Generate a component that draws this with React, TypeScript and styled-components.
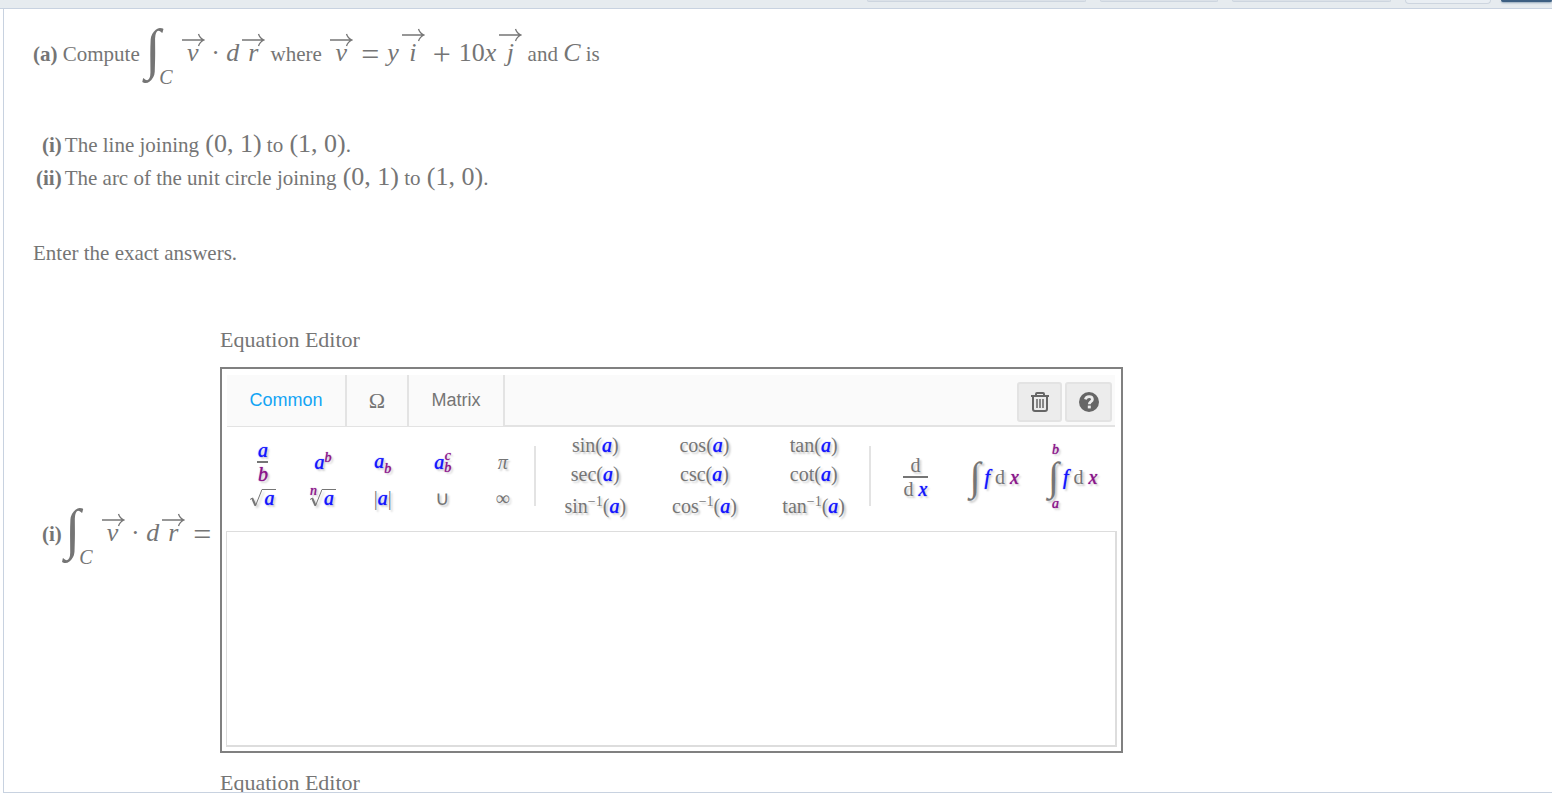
import React from "react";
import styled, { createGlobalStyle } from "styled-components";

const serif = `"Liberation Serif", "Times New Roman", serif`;
const sans = `"Liberation Sans", Arial, sans-serif`;
const ink = "#757575";

const GlobalStyle = createGlobalStyle`
  * { box-sizing: border-box; }
  body { margin: 0; background: #fff; }
`;

const Page = styled.div`
  display: flex;
  flex-direction: column;
  height: 100vh;
  padding-bottom: 2px;
  overflow: hidden;
  font-family: ${serif};
  font-size: 21px;
  line-height: 24px;
  color: ${ink};
`;

const TopBar = styled.header`
  flex: none;
  display: flex;
  justify-content: flex-end;
  align-items: flex-start;
  gap: 14px;
  height: 9px;
  overflow: hidden;
  background: #e6ebef;
  border-bottom: 1px solid #c8d2e0;
`;

const BarPair = styled.div`
  display: flex;
  align-items: flex-start;
  gap: 10px;
`;

const BarButton = styled.button<{ $width: number; $tone?: "light" | "dark" }>`
  flex: none;
  width: ${(p) => p.$width}px;
  height: ${(p) => (p.$tone === "light" ? 4 : 2)}px;
  padding: 0;
  border: 1px solid ${(p) => (p.$tone === "dark" ? "#3d5f82" : "#cdd5df")};
  border-top: 0;
  border-radius: 0 0 4px 4px;
  background: ${(p) => (p.$tone === "dark" ? "#3d5f82" : p.$tone === "light" ? "#e9eef3" : "#dbe1e8")};
  box-shadow: ${(p) => (p.$tone === "dark" ? "0 1px 2px #8fa3b8" : "none")};
`;

const Panel = styled.main`
  flex: 1;
  min-height: 0;
  overflow: hidden;
  margin-left: 3px;
  padding: 12px 16px 0 29px;
  border-left: 1px solid #c8d2e0;
  border-bottom: 1px solid #c8d2e0;
`;

const Prompt = styled.p`
  margin: 0;
  height: 108px;
  white-space: nowrap;
`;

const PathList = styled.ul`
  margin: 0;
  padding: 0;
  list-style: none;
  line-height: 33px;
`;

const PathItem = styled.li<{ $indent: number }>`
  height: 33px;
  padding-left: ${(p) => p.$indent}px;
`;

const Mark = styled.b`
  margin-right: 3px;
`;

const Instruction = styled.p`
  margin: 46px 0 0;
`;

const M = styled.span`
  font-size: 26px;
  line-height: 24px;
  white-space: pre;
`;

const Point = styled(M)`
  margin-left: 1px;
`;

const Op = styled.span`
  margin: 0 8px;
  font-size: 32px;
  line-height: 24px;
  vertical-align: -4px;
`;

const V = styled.i`
  font-size: 26px;
  line-height: 24px;
`;

const VecBox = styled.span<{ $raise: number }>`
  display: inline-block;
  margin-left: 2px;
  text-align: center;
  font-size: 26px;
  font-style: italic;
  line-height: 24px;
  svg {
    display: block;
    margin-bottom: ${(p) => p.$raise}px;
  }
`;

const IntegralBox = styled.span`
  font-size: 56px;
  font-style: italic;
  line-height: 56px;
  vertical-align: -7px;
`;

const IntegralLimit = styled.sub`
  margin: 0 6px 0 -1px;
  font-size: 20px;
  font-style: italic;
  line-height: 10px;
  vertical-align: -23px;
`;

function Vec({ children, raise = -6 }: { children: string; raise?: number }) {
  return (
    <VecBox $raise={raise}>
      <svg width="24" height="14" viewBox="0 0 24 14" fill="none" stroke={ink} strokeWidth="1.3">
        <path d="M1 7H23M17.5 1C18.5 4 20.5 6 23 7C20.5 8 18.5 10 17.5 13" />
      </svg>
      {children}
    </VecBox>
  );
}

function LineIntegral() {
  return (
    <>
      <IntegralBox>∫</IntegralBox>
      <IntegralLimit>C</IntegralLimit>
      <Vec>v</Vec>
      <M> · </M>
      <V>d</V>
      <Vec>r</Vec>
    </>
  );
}

const AnswerRow = styled.section`
  display: flex;
  margin-top: 63px;
`;

const AnswerLabel = styled.div`
  flex: none;
  width: 187px;
  padding: 173px 0 0 9px;
  white-space: nowrap;
`;

const EditorColumn = styled.div`
  flex: 1;
  min-width: 0;
  max-width: 903px;
`;

const EditorTitle = styled.h2`
  margin: 0 0 15px;
  font-size: 22px;
  font-weight: normal;
  line-height: 24px;
`;

const EditorBox = styled.div`
  margin-bottom: 18px;
  padding: 6px 4px 4px;
  border: 2px solid #808080;
`;

const TabBar = styled.div`
  display: flex;
  height: 52px;
  margin: 0 2px 0 1px;
  background: #fafafa;
`;

const Tab = styled.button<{ $active?: boolean; $width: number }>`
  flex: none;
  width: ${(p) => p.$width}px;
  padding: 0;
  border: 0;
  border-right: 2px solid #e3e3e3;
  border-bottom: 1px solid #e3e3e3;
  background: transparent;
  color: ${(p) => (p.$active ? "#12a4f4" : "#757575")};
  font-family: ${sans};
  font-size: 18px;
`;

const Omega = styled.span`
  font-family: ${serif};
  font-size: 22px;
`;

const TabActions = styled.div`
  flex: 1;
  display: flex;
  justify-content: flex-end;
  gap: 3px;
  padding: 7px 3px 3px 0;
  border-bottom: 2px solid #e3e3e3;
`;

const ActionButton = styled.button<{ $width: number }>`
  display: grid;
  place-items: center;
  width: ${(p) => p.$width}px;
  height: 40px;
  padding: 0;
  border: 2px solid #e3e3e3;
  border-radius: 3px;
  background: #ececec;
  color: #666;
`;

const Keys = styled.div`
  display: flex;
  height: 104px;
  padding: 0 5px 0 7px;
`;

const Divider = styled.div`
  flex: none;
  width: 2px;
  height: 60px;
  margin: 19px 5px 0 1px;
  background: #e3e3e3;
`;

const Group = styled.div<{ $share: number; $cols: number; $rows: string; $top: number }>`
  flex: ${(p) => p.$share} 1 0;
  display: grid;
  grid-template-columns: repeat(${(p) => p.$cols}, 1fr);
  grid-template-rows: ${(p) => p.$rows};
  align-content: start;
  padding-top: ${(p) => p.$top}px;
`;

const Key = styled.button`
  display: flex;
  align-items: center;
  justify-content: center;
  min-width: 0;
  padding: 0;
  border: 0;
  background: transparent;
  color: ${ink};
  font-family: ${serif};
  font-size: 20px;
  line-height: 24px;
  text-shadow: 2px 2px 2px #ccc;
  white-space: nowrap;
  sup, sub { font-size: 14px; line-height: 14px; }
  svg { filter: drop-shadow(2px 2px 1px #ccc); }
`;

const A = styled.i`
  color: #1414ff;
  text-shadow: 0 0 1px currentColor, 2px 2px 2px #ccc;
`;

const B = styled(A)`
  color: #8b148b;
`;

const Raised = styled.sup`
  vertical-align: 7px;
`;

const Stack = styled.span`
  display: inline-flex;
  flex-direction: column;
  align-items: center;
`;

const ScriptPair = styled(Stack)`
  font-size: 14px;
  line-height: 12px;
`;

const Fraction = styled(Stack)<{ $wide?: boolean }>`
  line-height: 22px;
  & > :first-child {
    min-width: ${(p) => (p.$wide ? 25 : 11)}px;
    border-bottom: 2px solid ${ink};
  }
`;

const Root = styled.span`
  display: flex;
  align-items: flex-start;
`;

const Radicand = styled.span`
  padding: 0 2px;
  border-top: 1px solid ${ink};
  line-height: 16px;
`;

const RootIndex = styled.span`
  margin: -4px -8px 0 0;
  font-size: 14px;
  line-height: 12px;
`;

const KeyIntegral = styled.span`
  margin-right: 4px;
  font-size: 40px;
  font-style: italic;
  line-height: 40px;
`;

const Limit = styled.span`
  font-size: 14px;
  line-height: 14px;
`;

const Workspace = styled.textarea`
  display: block;
  width: 100%;
  height: 216px;
  padding: 8px;
  border: solid #ddd;
  border-width: 1px 2px 2px 1px;
  outline: 0;
  resize: none;
  background: #fff;
  font-family: ${serif};
  font-size: 20px;
`;

function TrashIcon() {
  return (
    <svg width="20" height="22" viewBox="0 0 20 22" fill="none" stroke="currentColor" strokeWidth="2">
      <path d="M1 5H19M6 5V3Q6 2 7 2H13Q14 2 14 3V5M3 5V18Q3 20 5 20H15Q17 20 17 18V5" />
      <path d="M7 8V17M10 8V17M13 8V17" strokeWidth="1.5" />
    </svg>
  );
}

function HelpIcon() {
  return (
    <svg width="20" height="20" viewBox="0 0 20 20" fill="none">
      <circle cx="10" cy="10" r="10" fill="currentColor" />
      <path d="M6.4 7.4C7.2 3.6 13.4 3.8 13.4 7.4C13.4 9.8 10.3 9.6 10.3 12.2" stroke="#ececec" strokeWidth="2.8" />
      <rect x="8.8" y="13.6" width="3" height="2.8" fill="#ececec" />
    </svg>
  );
}

function RadicalSign() {
  return (
    <svg width="13" height="18" viewBox="0 0 13 18" fill="none" stroke={ink}>
      <path d="M1 10.5L3.5 9" strokeWidth="1" />
      <path d="M3.2 9.2L6.4 16.5" strokeWidth="2" />
      <path d="M6.4 17L13 0.5" strokeWidth="1" />
    </svg>
  );
}

function FunctionKey({ name, inverse }: { name: string; inverse?: boolean }) {
  return (
    <Key type="button">
      <span>
        {name}
        {inverse && <Raised>−1</Raised>}(<A>a</A>)
      </span>
    </Key>
  );
}

function Differential() {
  return (
    <span>
      <A>f</A> d <B>x</B>
    </span>
  );
}

function CommonKeys() {
  return (
    <Keys>
      <Group $share={300} $cols={5} $rows="44px 28px" $top={13}>
        <Key type="button">
          <Fraction>
            <A>a</A>
            <B>b</B>
          </Fraction>
        </Key>
        <Key type="button">
          <span><A>a</A><Raised><B>b</B></Raised></span>
        </Key>
        <Key type="button">
          <span><A>a</A><sub><B>b</B></sub></span>
        </Key>
        <Key type="button">
          <A>a</A>
          <ScriptPair><B>c</B><B>b</B></ScriptPair>
        </Key>
        <Key type="button"><i>π</i></Key>
        <Key type="button">
          <Root><RadicalSign /><Radicand><A>a</A></Radicand></Root>
        </Key>
        <Key type="button">
          <Root>
            <RootIndex><B>n</B></RootIndex>
            <RadicalSign />
            <Radicand><A>a</A></Radicand>
          </Root>
        </Key>
        <Key type="button">
          <span>|<A>a</A>|</span>
        </Key>
        <Key type="button">∪</Key>
        <Key type="button">∞</Key>
      </Group>
      <Divider />
      <Group $share={328} $cols={3} $rows="30px 28px 36px" $top={3}>
        <FunctionKey name="sin" />
        <FunctionKey name="cos" />
        <FunctionKey name="tan" />
        <FunctionKey name="sec" />
        <FunctionKey name="csc" />
        <FunctionKey name="cot" />
        <FunctionKey name="sin" inverse />
        <FunctionKey name="cos" inverse />
        <FunctionKey name="tan" inverse />
      </Group>
      <Divider />
      <Group $share={236} $cols={3} $rows="72px" $top={14}>
        <Key type="button">
          <Fraction $wide>
            <span>d</span>
            <span>d <A>x</A></span>
          </Fraction>
        </Key>
        <Key type="button">
          <KeyIntegral>∫</KeyIntegral>
          <Differential />
        </Key>
        <Key type="button">
          <Stack>
            <Limit><B>b</B></Limit>
            <KeyIntegral>∫</KeyIntegral>
            <Limit><B>a</B></Limit>
          </Stack>
          <Differential />
        </Key>
      </Group>
    </Keys>
  );
}

export default function App() {
  return (
    <>
      <GlobalStyle />
      <Page>
        <TopBar>
          <BarButton $width={219} aria-label="Previous" />
          <BarButton $width={118} aria-label="List" />
          <BarButton $width={159} aria-label="Next" />
          <BarPair>
            <BarButton $width={86} $tone="light" aria-label="Save" />
            <BarButton $width={51} $tone="dark" aria-label="Submit" />
          </BarPair>
        </TopBar>
        <Panel>
          <Prompt>
            <b>(a)</b> Compute <LineIntegral /> where <Vec>v</Vec>
            <Op>=</Op>
            <V>y</V>
            <Vec raise={-1}>i</Vec>
            <Op>+</Op>
            <M>10</M>
            <V>x</V>
            <Vec raise={-1}>j</Vec> and <V>C</V> is
          </Prompt>
          <PathList>
            <PathItem $indent={9}>
              <Mark>(i)</Mark>The line joining <Point>(0, 1)</Point> to <Point>(1, 0)</Point>.
            </PathItem>
            <PathItem $indent={3}>
              <Mark>(ii)</Mark>The arc of the unit circle joining <Point>(0, 1)</Point> to <Point>(1, 0)</Point>.
            </PathItem>
          </PathList>
          <Instruction>Enter the exact answers.</Instruction>
          <AnswerRow>
            <AnswerLabel>
              <Mark>(i)</Mark>
              <LineIntegral />
              <Op>=</Op>
            </AnswerLabel>
            <EditorColumn>
              <EditorTitle>Equation Editor</EditorTitle>
              <EditorBox>
                <TabBar>
                  <Tab type="button" $width={120} $active>Common</Tab>
                  <Tab type="button" $width={62} aria-label="Symbols"><Omega>Ω</Omega></Tab>
                  <Tab type="button" $width={96}>Matrix</Tab>
                  <TabActions>
                    <ActionButton type="button" $width={45} aria-label="Clear"><TrashIcon /></ActionButton>
                    <ActionButton type="button" $width={47} aria-label="Help"><HelpIcon /></ActionButton>
                  </TabActions>
                </TabBar>
                <CommonKeys />
                <Workspace aria-label="Equation" />
              </EditorBox>
              <EditorTitle>Equation Editor</EditorTitle>
            </EditorColumn>
          </AnswerRow>
        </Panel>
      </Page>
    </>
  );
}
